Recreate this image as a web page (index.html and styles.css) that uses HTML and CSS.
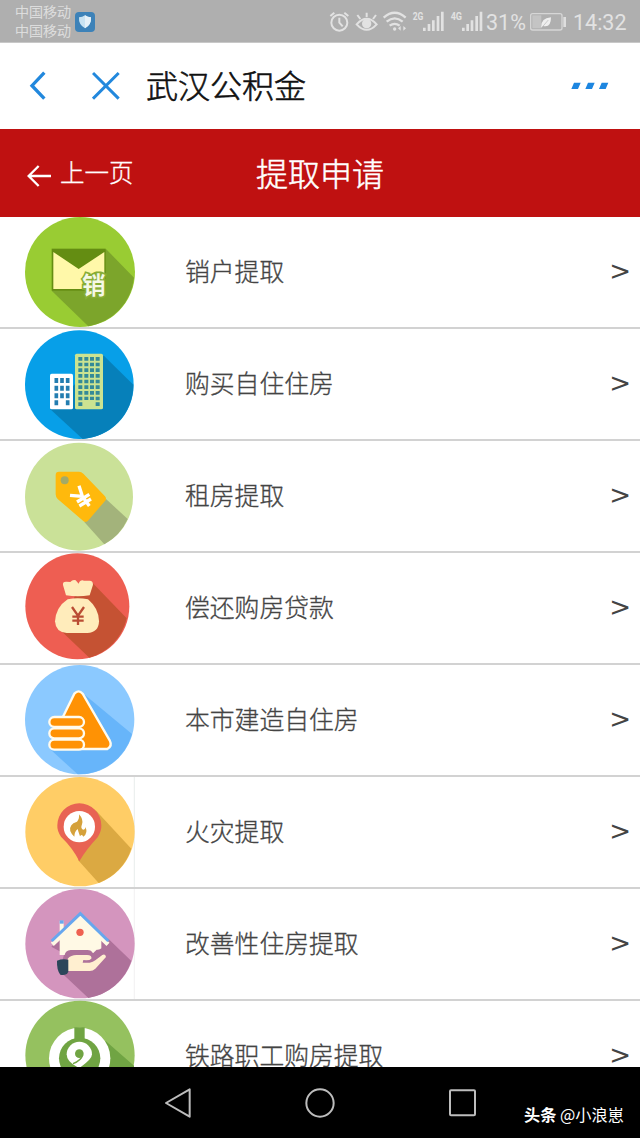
FILE: index.html
```html
<!DOCTYPE html>
<html lang="zh-CN">
<head>
    <meta charset="UTF-8">
    <meta name="viewport" content="width=device-width, initial-scale=1.0">
    <title>提取申请</title>
    <link rel="stylesheet" href="styles.css">
</head>
<body>
<div class="status-bar">
    <div class="carriers">
        <span>中国移动</span>
        <span>中国移动</span>
    </div>
    <svg class="shield" width="20" height="20" viewBox="0 0 60 60">
        <rect width="60" height="60" rx="12" fill="#3d82b8"/>
        <path d="M30 10Q38 16 48 16Q50 38 30 49Q10 38 12 16Q22 16 30 10Z" fill="#c9e3f2"/>
        <path d="M30 10Q38 16 48 16Q50 38 30 49Z" fill="#e6f1f8"/>
    </svg>
    <svg class="status-icons" width="166" height="42" viewBox="0 0 498 126" fill="none" stroke="#e2e2e2" stroke-width="6">
        <circle cx="58" cy="68" r="24"/>
        <path d="M58 53V68L68 79M31 48L43 38M73 38L85 48"/>
        <path d="M110 73Q140 40 170 73Q140 106 110 73Z"/>
        <circle cx="140" cy="71" r="11" fill="#e2e2e2"/>
        <path d="M140 38V51M112 45L121 57M168 45L159 57"/>
        <path d="M191 53Q224 24 257 53M200 65Q224 45 248 65M209 77Q224 66 239 77" stroke-width="7"/>
        <circle cx="224" cy="87" r="5" fill="#e2e2e2" stroke="none"/>
        <path d="M242 78L234 85L242 92ZM250 78L258 85L250 92Z" fill="#e2e2e2" stroke="none"/>
        <path d="M313 93V83M327 93V72M340 93V61M354 93V48M367 93V35" stroke-width="8"/>
        <path d="M430 93V83M443 93V72M456 93V61M470 93V48M483 93V35" stroke-width="8"/>
        <text class="network" x="278" y="59" textLength="32" lengthAdjust="spacingAndGlyphs">2G</text>
        <text class="network" x="392" y="59" textLength="34" lengthAdjust="spacingAndGlyphs">4G</text>
    </svg>
    <span class="percent">31%</span>
    <svg class="battery" width="37" height="18" viewBox="0 0 111 54">
        <rect x="2" y="2" width="94" height="49" rx="6" fill="none" stroke="#d6d6d6" stroke-width="4"/>
        <rect x="7" y="7" width="27" height="39" fill="#c4c4c4"/>
        <path d="M33 44Q32 15 63 13Q63 45 40 39Z" fill="#efefef"/>
        <path d="M36 43L55 21" stroke="#b5b5b5" stroke-width="2"/>
        <rect x="100" y="12" width="8" height="30" fill="#dedede"/>
    </svg>
    <span class="clock">14:32</span>
</div>

<div class="app-bar">
    <svg class="back" width="20" height="30" viewBox="0 0 60 90" fill="none" stroke="#2288dd" stroke-width="10">
        <path d="M52 5L15 44L52 83"/>
    </svg>
    <svg class="close" width="28" height="30" viewBox="0 0 84 90" fill="none" stroke="#2288dd" stroke-width="9">
        <path d="M3 6L80 83M80 6L3 83"/>
    </svg>
    <span class="app-name">武汉公积金</span>
    <svg class="more" width="38" height="8" viewBox="0 0 114 24" fill="#1d86e0">
        <path d="M9 2H29L21 21H1ZM51 2H71L63 21H43ZM92 2H112L104 21H84Z"/>
    </svg>
</div>

<header class="page-header">
    <div class="previous">
        <svg width="25" height="22" viewBox="0 0 75 66" fill="none" stroke="#fff" stroke-width="7">
            <path d="M72 33H5M35 3L5 33L35 63"/>
        </svg>
        <span>上一页</span>
    </div>
    <h1>提取申请</h1>
</header>

<div class="list">
    <div class="item">
        <svg class="icon" viewBox="0 6 420 330">
            <circle cx="210" cy="171" r="165" fill="#99cc33"/>
            <path d="M288 102L372 188A165 165 0 0 1 235 334L125 227Z" fill="#7ca52b"/>
            <rect x="125" y="101" width="162" height="126" fill="#648d12"/>
            <path d="M130 111L206 162L283 111V222H130Z" fill="#fff8a9"/>
            <text class="stamp" x="217" y="237">销</text>
        </svg>
        <span class="name">销户提取</span>
        <span class="arrow">&gt;</span>
    </div>
    <div class="item">
        <svg class="icon" viewBox="0 3 420 330">
            <circle cx="208" cy="170" r="163" fill="#079fe8"/>
            <path d="M280 82L370 170A163 163 0 0 1 218 333L121 244Z" fill="#0680ba"/>
            <rect x="120" y="137" width="69" height="107" rx="5" fill="#fff"/>
            <path d="M139 150V219M156 150V213M173 150V219" stroke="#237db0" stroke-width="11" stroke-dasharray="15 8"/>
            <path d="M139 217V232M173 217V232" stroke="#237db0" stroke-width="11"/>
            <rect x="195" y="77" width="84" height="167" rx="5" fill="#cbe391"/>
            <path d="M211 87V234M263 87V234M229 87V216M246 87V216" stroke="#348a98" stroke-width="12" stroke-dasharray="11 6"/>
        </svg>
        <span class="name">购买自住住房</span>
        <span class="arrow">&gt;</span>
    </div>
    <div class="item">
        <svg class="icon" viewBox="0 3 420 330">
            <circle cx="207" cy="170" r="162" fill="#cae198"/>
            <path d="M288 177L353 237A162 162 0 0 1 283 313L223 246Z" fill="#a3b37b"/>
            <path d="M147 95H207Q214 95 220 101L285 169Q291 176 285 183L234 242Q226 249 219 242L143 177Q137 171 137 163V105Q137 95 147 95Z" fill="#ffb90c"/>
            <circle cx="164" cy="121" r="12" fill="#a3aa68"/>
            <path d="M207 137L217 169M180 166L217 169L238 198M201 186L238 163M208 198L243 177" fill="none" stroke="#fff" stroke-width="10"/>
        </svg>
        <span class="name">租房提取</span>
        <span class="arrow">&gt;</span>
    </div>
    <div class="item">
        <svg class="icon" viewBox="0 9 420 330">
            <ellipse cx="202" cy="169" rx="156" ry="159" fill="#ee5e52"/>
            <path d="M248 99L350 205A156 159 0 0 1 238 323L157 246L194 139Z" fill="#c55233"/>
            <path d="M168 136L159 105Q157 94 170 95L181 96Q188 88 197 91L206 101Q211 88 222 92L237 92Q249 91 249 104L239 136Q203 142 168 136Z" fill="#ffecbb"/>
            <path d="M173 148Q203 142 234 148Q267 176 267 214Q266 248 232 249H170Q137 247 135 214Q138 171 173 148Z" fill="#ffecbb"/>
            <path d="M186 171L204 197L222 171M204 197V225M187 200H221M187 212H221" fill="none" stroke="#ba4c33" stroke-width="7"/>
        </svg>
        <span class="name">偿还购房贷款</span>
        <span class="arrow">&gt;</span>
    </div>
    <div class="item">
        <svg class="icon" viewBox="0 9 420 330">
            <circle cx="209" cy="173" r="164" fill="#8bc9ff"/>
            <path d="M225 99L366 216A164 164 0 0 1 203 337L119 260Z" fill="#67b5fa"/>
            <g fill="#ff9204" stroke="#fffbee" stroke-width="7">
                <path d="M193 95Q206 81 218 95L299 235Q308 253 292 261H211L159 164Z"/>
                <rect x="118" y="165" width="104" height="30" rx="15"/>
                <rect x="118" y="199" width="104" height="30" rx="15"/>
                <rect x="118" y="233" width="104" height="30" rx="15"/>
            </g>
        </svg>
        <span class="name">本市建造自住房</span>
        <span class="arrow">&gt;</span>
    </div>
    <div class="item">
        <svg class="icon" viewBox="0 9 420 330">
            <path d="M373 9V339" stroke="#dde4e2" stroke-width="2"/>
            <circle cx="210" cy="173" r="164" fill="#ffcd66"/>
            <path d="M257 109L364 224A164 164 0 0 1 266 327L204 258Z" fill="#dba942"/>
            <path d="M208 262Q190 224 153 188Q141 171 142 154A66 66 0 0 1 274 154Q275 171 263 190Q229 226 208 262Z" fill="#e86353"/>
            <circle cx="208" cy="158" r="47" fill="#fff"/>
            <path d="M193 188Q173 170 184 154Q188 147 201 143Q209 134 207 121Q221 136 216 151Q211 164 219 167Q227 166 226 158Q235 177 220 188Q216 178 210 187Q205 173 203 165Q193 173 193 188Z" fill="#d5a13b"/>
        </svg>
        <span class="name">火灾提取</span>
        <span class="arrow">&gt;</span>
    </div>
    <div class="item">
        <svg class="icon" viewBox="0 9 420 330">
            <path d="M373 9V339" stroke="#ebe8eb" stroke-width="2"/>
            <circle cx="210" cy="173" r="164" fill="#d495be"/>
            <path d="M295 158L364 225A164 164 0 0 1 235 336L148 254L163 203L124 182L151 157Z" fill="#ae719a"/>
            <path d="M149 190V104H161V125L211 86L274 152V187Q270 192 260 191L249 202Q244 191 230 192H182Q166 193 164 207H149Z" fill="#fff9e5"/>
            <path d="M127 175L211 95L294 175" fill="none" stroke="#fff9e5" stroke-width="13"/>
            <path d="M125 165L211 83L295 165" fill="none" stroke="#67a7ef" stroke-width="9"/>
            <path d="M149 113V103H161V113" fill="#67a7ef"/>
            <circle cx="210" cy="139" r="11" fill="#ef6151"/>
            <path d="M173 218Q184 205 205 207H231Q247 208 244 218Q239 224 220 222L218 230H239Q249 229 256 223L277 207Q286 203 288 213L256 248Q249 255 239 255H174Z" fill="#ffefd0"/>
            <path d="M141 224Q157 217 175 221V257Q169 270 151 266Q140 253 141 224Z" fill="#2b465a"/>
        </svg>
        <span class="name">改善性住房提取</span>
        <span class="arrow">&gt;</span>
    </div>
    <div class="item">
        <svg class="icon" viewBox="0 15 420 330">
            <circle cx="210" cy="178" r="164" fill="#95c15f"/>
            <path d="M287 135L372 209V260L300 310L150 250Z" fill="#70a443"/>
            <circle cx="209" cy="187" r="92" fill="#fff"/>
            <circle cx="209" cy="187" r="62" fill="#70a443"/>
            <path d="M193 94H224V135H193Z" fill="#70a443"/>
            <path d="M208 137A38 38 0 0 1 246 175Q246 190 208 216Q170 199 170 175A38 38 0 0 1 208 137Z" fill="#fff"/>
            <circle cx="208" cy="173" r="13" fill="#70a443"/>
            <path d="M218 177Q214 193 189 203" fill="none" stroke="#70a443" stroke-width="4"/>
        </svg>
        <span class="name">铁路职工购房提取</span>
        <span class="arrow">&gt;</span>
    </div>
</div>

<div class="nav-bar">
    <svg width="26" height="30" viewBox="0 0 78 90" fill="none" stroke="#bdbdbd" stroke-width="6" stroke-linejoin="round">
        <path d="M74 4V86L3 45Z"/>
    </svg>
    <svg width="30" height="30" viewBox="0 0 90 90" fill="none" stroke="#bdbdbd" stroke-width="6">
        <circle cx="45" cy="45" r="41"/>
    </svg>
    <svg width="28" height="28" viewBox="0 0 84 84" fill="none" stroke="#bdbdbd" stroke-width="6">
        <rect x="3" y="4" width="75" height="75" rx="3"/>
    </svg>
    <div class="watermark"><b>头条</b> @小浪崽</div>
</div>
</body>
</html>
```
FILE: styles.css
```css
body {
    margin: 0;
    height: 1138px;
    display: flex;
    flex-direction: column;
    overflow: hidden;
    font-family: "Noto Sans CJK SC", sans-serif;
    background-color: #fff;
}
svg {
    display: block;
    flex-shrink: 0;
}
.status-bar {
    height: 43px;
    flex-shrink: 0;
    display: flex;
    align-items: center;
    background-color: #afafaf;
    color: #e2e2e2;
    border-bottom: 1px solid #c8c8c8;
    box-sizing: border-box;
}
.carriers {
    display: flex;
    flex-direction: column;
    width: 60px;
    padding-left: 15px;
    font-size: 14px;
    line-height: 19px;
    font-weight: 300;
    -webkit-text-stroke: 0.2px;
}
.shield {
    margin-top: 2px;
}
.status-icons {
    margin-left: 225px;
}
.network {
    font: bold 32px "Roboto", sans-serif;
    fill: #e2e2e2;
    stroke: none;
}
.percent, .clock {
    font-family: "Roboto", sans-serif;
    font-size: 21.5px;
    padding-top: 3px;
}
.percent {
    width: 44px;
}
.battery {
    margin-top: 1px;
}
.clock {
    margin-left: 6px;
}
.app-bar {
    height: 86px;
    flex-shrink: 0;
    display: flex;
    align-items: center;
    padding: 0 31px 0 26px;
}
.back {
    margin-left: 1px;
}
.close {
    margin-left: 45px;
}
.app-name {
    margin-left: 26px;
    padding-bottom: 4px;
    font-size: 32px;
    line-height: 40px;
    font-weight: 300;
    color: #111;
    -webkit-text-stroke: 0.6px;
}
.more {
    margin-left: auto;
}
.page-header {
    height: 88px;
    flex-shrink: 0;
    display: grid;
    grid-template-columns: 1fr auto 1fr;
    align-items: center;
    background-color: #bf1111;
    color: #fff;
}
.previous {
    display: flex;
    align-items: center;
    padding-left: 27px;
    font-size: 24.5px;
    line-height: 34px;
    font-weight: 300;
    -webkit-text-stroke: 0.3px;
}
.previous span {
    padding-bottom: 2px;
}
.previous svg {
    margin-top: 5px;
    margin-right: 8px;
}
.page-header h1 {
    margin: 0;
    padding-bottom: 3px;
    font-size: 32px;
    line-height: 40px;
    font-weight: 300;
    -webkit-text-stroke: 0.5px;
}
.list {
    flex: 1;
    min-height: 0;
    overflow: hidden;
}
.item {
    height: 112px;
    box-sizing: border-box;
    display: flex;
    align-items: center;
    padding: 0 9px 0 10px;
    border-bottom: 2px solid #d2d2d2;
}
.icon {
    width: 140px;
    height: 110px;
    overflow: visible;
}
.stamp {
    font: bold 70px "Noto Sans CJK SC", sans-serif;
    fill: #f5f8e6;
    stroke: #87ad35;
    stroke-width: 10px;
    paint-order: stroke;
}
.name {
    margin-left: 35px;
    padding-bottom: 4px;
    font-size: 24.8px;
    line-height: 32px;
    font-weight: 300;
    color: #444;
    -webkit-text-stroke: 0.3px;
}
.arrow {
    margin-left: auto;
    padding-bottom: 3px;
    font-family: "DejaVu Sans", sans-serif;
    font-size: 26px;
    line-height: 30px;
    color: #444;
}
.nav-bar {
    height: 71px;
    flex-shrink: 0;
    display: flex;
    align-items: center;
    padding-left: 165px;
    gap: 114px;
    background-color: #000;
}
.watermark {
    margin-left: -67px;
    margin-top: 23px;
    font-size: 16.2px;
    line-height: 26px;
    color: #fff;
    white-space: nowrap;
}
```
